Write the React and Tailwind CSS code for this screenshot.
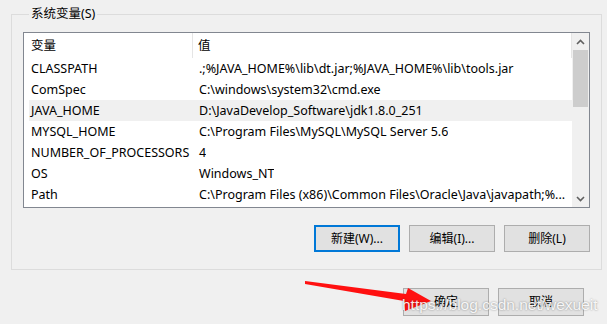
const VARS = [
  ['CLASSPATH', '.;%JAVA_HOME%\\lib\\dt.jar;%JAVA_HOME%\\lib\\tools.jar'],
  ['ComSpec', 'C:\\windows\\system32\\cmd.exe'],
  ['JAVA_HOME', 'D:\\JavaDevelop_Software\\jdk1.8.0_251'],
  ['MYSQL_HOME', 'C:\\Program Files\\MySQL\\MySQL Server 5.6'],
  ['NUMBER_OF_PROCESSORS', '4'],
  ['OS', 'Windows_NT'],
  ['Path', 'C:\\Program Files (x86)\\Common Files\\Oracle\\Java\\javapath;%...'],
]

function WinButton({ children, primary }) {
  return (
    <button
      className={`w-[86px] h-[27px] bg-[#e1e1e1] text-[12px] text-black flex items-center justify-center ${
        primary ? 'border-2 border-[#0078d7]' : 'border border-[#adadad]'
      }`}
    >
      {children}
    </button>
  )
}

function Chevron({ up }) {
  return (
    <svg width="9" height="6" viewBox="0 0 9 6" className="text-[#606060]">
      <path
        d={up ? 'M1 5L4.5 1.5L8 5' : 'M1 1L4.5 4.5L8 1'}
        fill="none"
        stroke="currentColor"
        strokeWidth="1.6"
      />
    </svg>
  )
}

export default function App() {
  return (
    <div className="relative w-[607px] h-[324px] bg-[#f0f0f0] overflow-hidden font-['Noto_Sans','Noto_Sans_CJK_SC',sans-serif] text-[12px] text-black">
      {/* group box */}
      <fieldset className="ml-[11px] mt-[6px] w-[591px] h-[264px] border border-[#dcdcdc] px-[11px]">
        <legend className="ml-[6px] px-[2px] leading-[16px] text-[12.5px]">系统变量(S)</legend>

        {/* list view */}
        <div className="mt-[10px] w-[567px] h-[176px] border border-[#828790] bg-white flex text-[12.5px]">
          <div className="flex-1 flex flex-col">
            <div className="h-[25px] flex items-center border-r border-[#e5e5e5]">
              <div className="w-[169px] pl-[7px] pt-[2px] h-full flex items-center border-r border-[#e5e5e5]">变量</div>
              <div className="pl-[5px] pt-[2px]">值</div>
            </div>
            <div className="flex flex-col pl-[5px]">
              {VARS.map(([k, v], i) => (
                <div key={k} className={`h-[21px] pt-[2px] flex items-center ${i === 2 ? 'bg-[#f0f0f0]' : ''}`}>
                  <div className="w-[164px] pl-[2px] whitespace-nowrap">{k}</div>
                  <div className="pl-[6px] whitespace-nowrap overflow-hidden">{v}</div>
                </div>
              ))}
            </div>
          </div>
          {/* scrollbar */}
          <div className="w-[17px] bg-[#f0f0f0] flex flex-col">
            <div className="h-[17px] flex items-center justify-center">
              <Chevron up />
            </div>
            <div className="h-[57px] mx-[1px] bg-[#cdcdcd]" />
            <div className="flex-1" />
            <div className="h-[17px] flex items-center justify-center">
              <Chevron />
            </div>
          </div>
        </div>

        <div className="mt-[17px] w-[567px] flex justify-end gap-[9px]">
          <WinButton primary>新建(W)...</WinButton>
          <WinButton>编辑(I)...</WinButton>
          <WinButton>删除(L)</WinButton>
        </div>
      </fieldset>

      <div className="mt-[18px] pr-[23px] flex justify-end gap-[9px]">
        <button className="w-[86px] h-[28px] bg-[#e1e1e1] border border-[#adadad] text-[12px]">确定</button>
        <button className="w-[86px] h-[28px] bg-[#e1e1e1] border border-[#adadad] text-[12px]">取消</button>
      </div>

      {/* red arrow annotation */}
      <svg className="absolute left-0 top-0 pointer-events-none" width="607" height="324">
        <polygon
          points="305,281 406,294 408,288 431,301 405,311 404,301 305,284"
          fill="#ff1010"
        />
      </svg>

      {/* watermark */}
      <div className="absolute left-[402px] top-[293px] text-[15.5px] font-['Liberation_Sans',sans-serif] text-white/90 [text-shadow:0_0_2px_rgba(0,0,0,0.45)] whitespace-nowrap pointer-events-none">
        https://blog.csdn.net/wexueit
      </div>
    </div>
  )
}
